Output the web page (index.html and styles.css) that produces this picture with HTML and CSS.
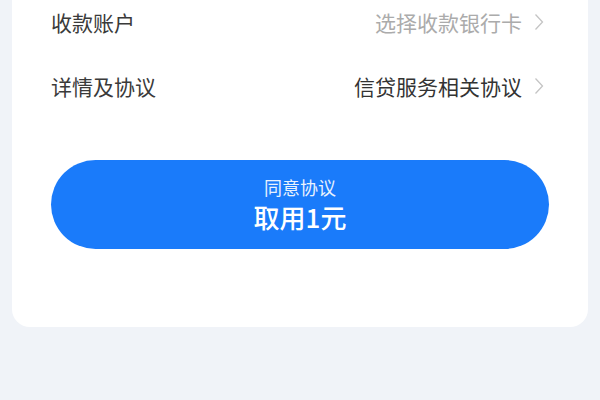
FILE: index.html
```html
<!DOCTYPE html>
<html lang="zh">
<head>
<meta charset="utf-8">
<link rel="stylesheet" href="styles.css">
</head>
<body>
<div class="page">
  <div class="card">
    <div class="row">
      <span class="label">收款账户</span>
      <span class="value muted">选择收款银行卡<svg class="chev" viewBox="0 0 10 18" width="10" height="18"><path d="M1.5 1.5 L8.5 9 L1.5 16.5" fill="none" stroke="#c4c4c4" stroke-width="1.3"/></svg></span>
    </div>
    <div class="row">
      <span class="label">详情及协议</span>
      <span class="value">信贷服务相关协议<svg class="chev" viewBox="0 0 10 18" width="10" height="18"><path d="M1.5 1.5 L8.5 9 L1.5 16.5" fill="none" stroke="#c4c4c4" stroke-width="1.3"/></svg></span>
    </div>
    <button class="btn">
      <span class="btn-sub">同意协议</span>
      <span class="btn-main">取用1元</span>
    </button>
  </div>
</div>
</body>
</html>
```
FILE: styles.css
```css
* { box-sizing: border-box; }
html, body { margin: 0; padding: 0; }
body {
  background: #f0f3f8;
  font-family: "Noto Sans CJK SC", "Noto Sans", sans-serif;
  width: 600px;
  height: 400px;
  overflow: hidden;
}
.page {
  padding: 0 12px;
}
.card {
  margin-top: -10px;
  background: #ffffff;
  border-radius: 0 0 18px 18px;
  padding: 0 39px 78px;
}
.row {
  height: 64px;
  display: flex;
  align-items: center;
  justify-content: space-between;
}
.label {
  font-size: 21px;
  color: #3a3a3a;
}
.value {
  font-size: 21px;
  color: #333333;
  display: flex;
  align-items: center;
}
.value.muted {
  color: #ababab;
}
.chev {
  margin-left: 12px;
  margin-right: 5px;
}
.btn {
  margin-top: 42px;
  width: 100%;
  height: 89px;
  border: none;
  border-radius: 45px;
  background: #1a7bfa;
  color: #ffffff;
  display: flex;
  flex-direction: column;
  align-items: center;
  justify-content: center;
  font-family: inherit;
  padding: 0;
}
.btn-sub {
  font-size: 18px;
  line-height: 24px;
  opacity: 0.9;
}
.btn-main {
  font-size: 26px;
  line-height: 36px;
  font-weight: 500;
}
```
